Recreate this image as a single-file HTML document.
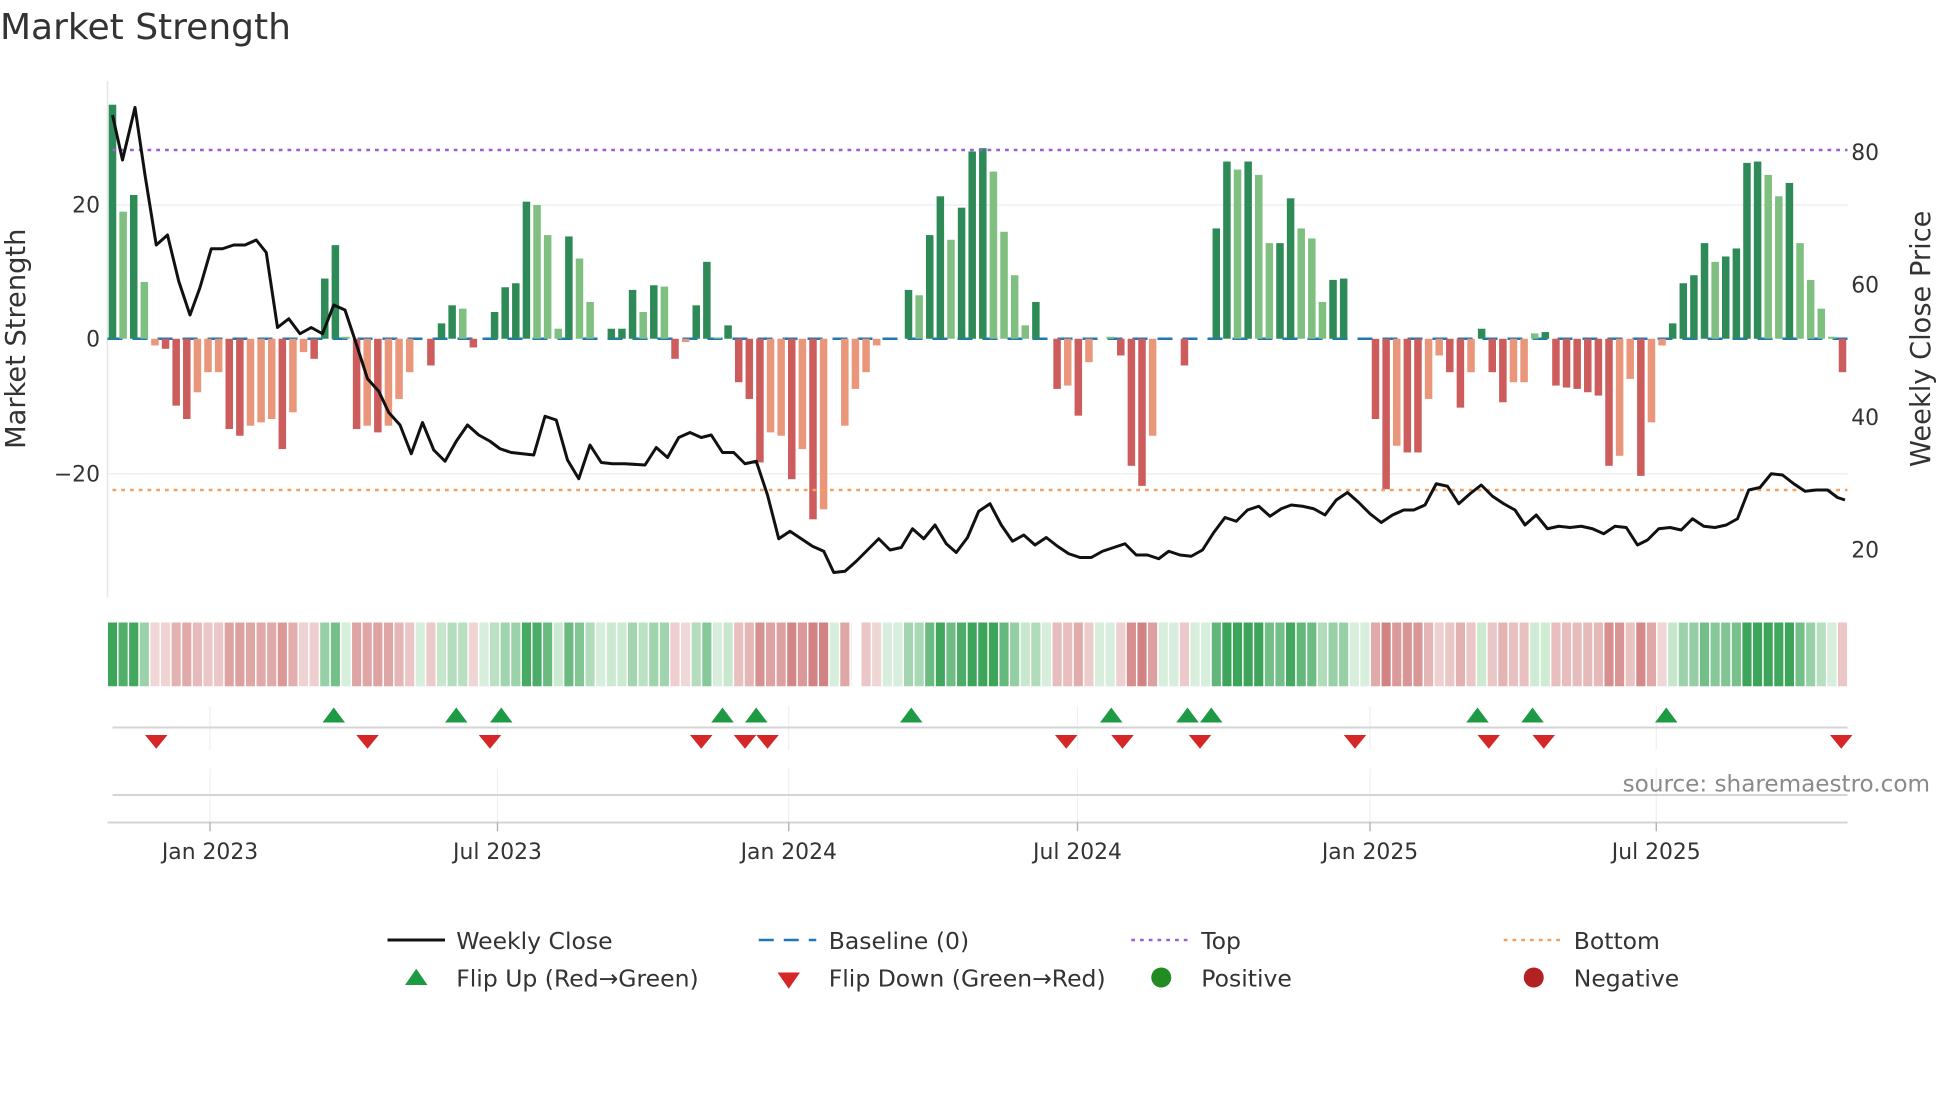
<!DOCTYPE html>
<html><head><meta charset="utf-8"><style>
html,body{margin:0;padding:0;background:#fff;width:1960px;height:1102px;overflow:hidden}
svg text{font-family:"DejaVu Sans","Liberation Sans",sans-serif;fill:#333}
</style></head><body>
<svg id="s" width="1960" height="1102" viewBox="0 0 1568 881.6" xmlns="http://www.w3.org/2000/svg">
<rect width="1568" height="882" fill="#fff"/>
<text x="0" y="31" font-size="28.8" fill="#333">Market Strength</text>
<g stroke="#eef0f4" stroke-width="1.3">
<line x1="86" y1="164" x2="1478" y2="164"/>
<line x1="86" y1="379" x2="1478" y2="379"/>
</g>
<line x1="86" y1="65" x2="86" y2="478" stroke="#e6e6e6" stroke-width="1.2"/>
<g font-size="17.5" text-anchor="end">
<text x="80" y="170">20</text><text x="80" y="277">0</text><text x="80" y="385">−20</text>
</g>
<g font-size="17.5">
<text x="1481" y="128">80</text><text x="1481" y="234">60</text><text x="1481" y="340">40</text><text x="1481" y="446">20</text>
</g>
<text transform="translate(20,271) rotate(-90)" font-size="21.8" text-anchor="middle">Market Strength</text>
<text transform="translate(1544,271) rotate(-90)" font-size="21.8" text-anchor="middle">Weekly Close Price</text>
<line x1="86" y1="271" x2="1478" y2="271" stroke="#1f77b4" stroke-width="2" stroke-dasharray="12,8"/>
<g id="bars"></g>
<line x1="90" y1="120" x2="1478" y2="120" stroke="#9a5fd6" stroke-width="2" stroke-dasharray="3,4"/>
<line x1="90" y1="392" x2="1478" y2="392" stroke="#f0a060" stroke-width="2" stroke-dasharray="3,4"/>
<polyline id="close" fill="none" stroke="#111" stroke-width="2.4" stroke-linejoin="round"/>
<g id="strip"></g>
<g stroke="#eef0f4" stroke-width="1">
<line x1="168" y1="565" x2="168" y2="600"/><line x1="398" y1="565" x2="398" y2="600"/><line x1="631" y1="565" x2="631" y2="600"/><line x1="862" y1="565" x2="862" y2="600"/><line x1="1096" y1="565" x2="1096" y2="600"/><line x1="1325" y1="565" x2="1325" y2="600"/>
<line x1="168" y1="615" x2="168" y2="658"/><line x1="398" y1="615" x2="398" y2="658"/><line x1="631" y1="615" x2="631" y2="658"/><line x1="862" y1="615" x2="862" y2="658"/><line x1="1096" y1="615" x2="1096" y2="658"/><line x1="1325" y1="615" x2="1325" y2="658"/>
</g>
<line x1="90" y1="582" x2="1478" y2="582" stroke="#d4d4d4" stroke-width="1.6"/>
<line x1="90" y1="636" x2="1478" y2="636" stroke="#d4d4d4" stroke-width="1.6"/>
<line x1="86" y1="658" x2="1478" y2="658" stroke="#d4d4d4" stroke-width="1.6"/>
<g id="marks"></g>
<text x="1544" y="633" font-size="18.5" text-anchor="end" style="fill:#8a8a8a">source: sharemaestro.com</text>
<g stroke="#aaa" stroke-width="1"><line x1="168" y1="658" x2="168" y2="665"/><line x1="398" y1="658" x2="398" y2="665"/><line x1="631" y1="658" x2="631" y2="665"/><line x1="862" y1="658" x2="862" y2="665"/><line x1="1096" y1="658" x2="1096" y2="665"/><line x1="1325" y1="658" x2="1325" y2="665"/></g>
<g font-size="17.5" text-anchor="middle">
<text x="168" y="687">Jan 2023</text><text x="398" y="687">Jul 2023</text><text x="631" y="687">Jan 2024</text><text x="862" y="687">Jul 2024</text><text x="1096" y="687">Jan 2025</text><text x="1325" y="687">Jul 2025</text>
</g>
<g font-size="18.8">
<line x1="310" y1="752" x2="356" y2="752" stroke="#111" stroke-width="2.4"/>
<text x="365" y="759">Weekly Close</text>
<line x1="607" y1="752" x2="653" y2="752" stroke="#1f77b4" stroke-width="2" stroke-dasharray="12,8"/>
<text x="663" y="759">Baseline (0)</text>
<line x1="905" y1="752" x2="951" y2="752" stroke="#9a5fd6" stroke-width="2" stroke-dasharray="3,4"/>
<text x="961" y="759">Top</text>
<line x1="1203" y1="752" x2="1249" y2="752" stroke="#f0a060" stroke-width="2" stroke-dasharray="3,4"/>
<text x="1259" y="759">Bottom</text>
<polygon points="324,788 342,788 333,775" fill="#1e9a45"/>
<text x="365" y="789">Flip Up (Red→Green)</text>
<polygon points="622,778 640,778 631,791" fill="#d62728"/>
<text x="663" y="789">Flip Down (Green→Red)</text>
<circle cx="929" cy="782" r="8" fill="#228b22"/>
<text x="961" y="789">Positive</text>
<circle cx="1227" cy="782" r="8" fill="#b22222"/>
<text x="1259" y="789">Negative</text>
</g>
</svg>
<script>
var V=[35,'d',19,'l',21.5,'d',8.5,'l',-1,'l',-1.5,'d',-10,'d',-12,'d',-8,'l',-5,'l',-5,'l',-13.5,'d',-14.5,'d',-13,'l',-12.5,'l',-12,'l',-16.5,'d',-11,'l',-2,'l',-3,'d',9,'d',14,'d',0.3,'l',-13.5,'d',-13,'l',-14,'d',-13,'l',-9,'l',-5,'l',0,'l',-4,'d',2.3,'d',5,'d',4.5,'l',-1.3,'d',0,'l',4,'d',7.7,'d',8.3,'d',20.5,'d',20,'l',15.5,'l',1.5,'l',15.3,'d',12,'l',5.5,'l',0,'l',1.5,'d',1.5,'d',7.3,'d',4,'l',8,'d',7.8,'l',-3,'d',-0.5,'l',5,'d',11.5,'d',0.2,'l',2,'d',-6.5,'d',-9,'d',-18.5,'d',-14,'l',-14.5,'l',-21,'d',-16.5,'l',-27,'d',-25.5,'l',0,'l',-13,'l',-7.5,'l',-5,'l',-1,'l',0,'l',0,'l',7.3,'d',6.5,'l',15.5,'d',21.3,'d',14.8,'l',19.6,'d',28,'d',28.5,'d',25,'l',16,'l',9.5,'l',2,'l',5.5,'d',0,'l',-7.5,'d',-7,'l',-11.5,'d',-3.5,'l',0,'l',0.3,'l',-2.5,'d',-19,'d',-22,'d',-14.5,'l',0,'l',0,'l',-4,'d',0,'l',0,'l',16.5,'d',26.5,'d',25.3,'l',26.5,'d',24.5,'l',14.3,'l',14.3,'d',21,'d',16.5,'l',15,'l',5.5,'l',8.8,'d',9,'d',0,'l',0,'l',-12,'d',-22.5,'d',-16,'l',-17,'d',-17,'d',-9,'l',-2.5,'l',-5,'d',-10.3,'d',-5,'l',1.5,'d',-5,'d',-9.5,'d',-6.5,'l',-6.5,'l',0.8,'l',1,'d',-7,'d',-7.3,'d',-7.5,'d',-8,'d',-8.5,'d',-19,'d',-17.5,'l',-6,'l',-20.5,'d',-12.5,'l',-1,'l',2.3,'d',8.3,'d',9.5,'d',14.3,'d',11.5,'l',12.3,'d',13.5,'d',26.3,'d',26.5,'d',24.5,'l',21.3,'l',23.3,'d',14.3,'l',8.8,'l',4.5,'l',0.3,'l',-5,'d'];
var ns='http://www.w3.org/2000/svg';
function el(t,a,p){var e=document.createElementNS(ns,t);for(var k in a)e.setAttribute(k,a[k]);p.appendChild(e);return e;}
var n=V.length/2,x0=90,x1=1474,sp=(x1-x0)/(n-1),bw=6,bars=document.getElementById('bars'),strip=document.getElementById('strip');
for(var i=0;i<n;i++){var v=V[2*i],d=V[2*i+1]=='d',x=x0+i*sp;
 var c=v>=0?(d?'#2e8b57':'#7fbf7f'):(d?'#cd5c5c':'#e9967a');
 var h=Math.abs(v)*5.35;
 if(h>0.3)el('rect',{x:x-bw/2,y:v>=0?271-h:271,width:bw,height:h,fill:c},bars);
 var t=Math.min(1,Math.abs(v)/22);
 var col;
 if(v>=0){var r=Math.round(214-(214-60)*t),g=Math.round(238-(238-165)*t),b=Math.round(218-(218-90)*t);col='rgb('+r+','+g+','+b+')';}
 else{var r=Math.round(242-(242-210)*t),g=Math.round(218-(218-130)*t),b=Math.round(218-(218-130)*t);col='rgb('+r+','+g+','+b+')';}
 if(v>=0&&v<0.5)col='#d6eedb';
 el('rect',{x:x-sp/2+0.6,y:498,width:sp-1.2,height:51,fill:col},strip);
}
el('rect',{x:681,y:496,width:8,height:55,fill:'#fff'},strip);
var P=[90,92,98,128,108,86,116,140,125,196,134,188,143,225,152,252,160,230,169,199,178,199,187,196,196,196,205,192,213,202,222,262,231,255,240,267,249,262,258,267,267,244,276,248,285,275,294,303,303,313,311,330,320,340,329,363,338,338,347,360,356,369,365,353,374,340,383,348,392,353,400,359,409,362,418,363,427,364,436,333,445,336,454,368,463,383,472,356,481,370,490,371,500,371,516,372,525,358,534,366,543,350,552,346,561,350,569,348,578,362,587,362,596,371,605,369,614,396,623,431,632,425,641,431,650,437,659,441,667,458,676,457,685,449,694,440,703,431,712,440,721,438,730,423,739,431,748,420,757,435,765,442,774,430,783,409,792,403,801,420,810,433,819,428,828,436,837,430,846,437,855,443,864,446,873,446,882,441,891,438,900,435,909,444,918,444,927,447,935,441,944,444,953,445,962,440,971,426,980,414,989,417,998,408,1007,405,1016,413,1025,407,1033,404,1042,405,1051,407,1060,412,1069,400,1078,394,1087,402,1096,411,1105,418,1114,412,1123,408,1131,408,1140,404,1149,387,1158,389,1167,403,1176,395,1185,388,1194,397,1203,403,1212,408,1220,420,1229,412,1238,423,1247,421,1256,422,1265,421,1274,423,1283,427,1292,421,1301,422,1310,436,1318,432,1327,423,1336,422,1345,424,1354,415,1363,421,1372,422,1381,420,1390,415,1399,392,1408,390,1417,379,1426,380,1435,387,1444,393,1453,392,1462,392,1470,398,1476,400];
var s='';for(var j=0;j<P.length;j+=2)s+=P[j]+','+P[j+1]+' ';
document.getElementById('close').setAttribute('points',s);
var marks=document.getElementById('marks');
[267,365,401,578,605,729,889,950,969,1182,1226,1333].forEach(function(x){el('polygon',{points:(x-9)+',578 '+(x+9)+',578 '+x+',566',fill:'#1e9a45'},marks);});
[125,294,392,561,596,614,853,898,960,1084,1191,1235,1473].forEach(function(x){el('polygon',{points:(x-9)+',588 '+(x+9)+',588 '+x+',599',fill:'#d62728'},marks);});
</script>
</body></html>
